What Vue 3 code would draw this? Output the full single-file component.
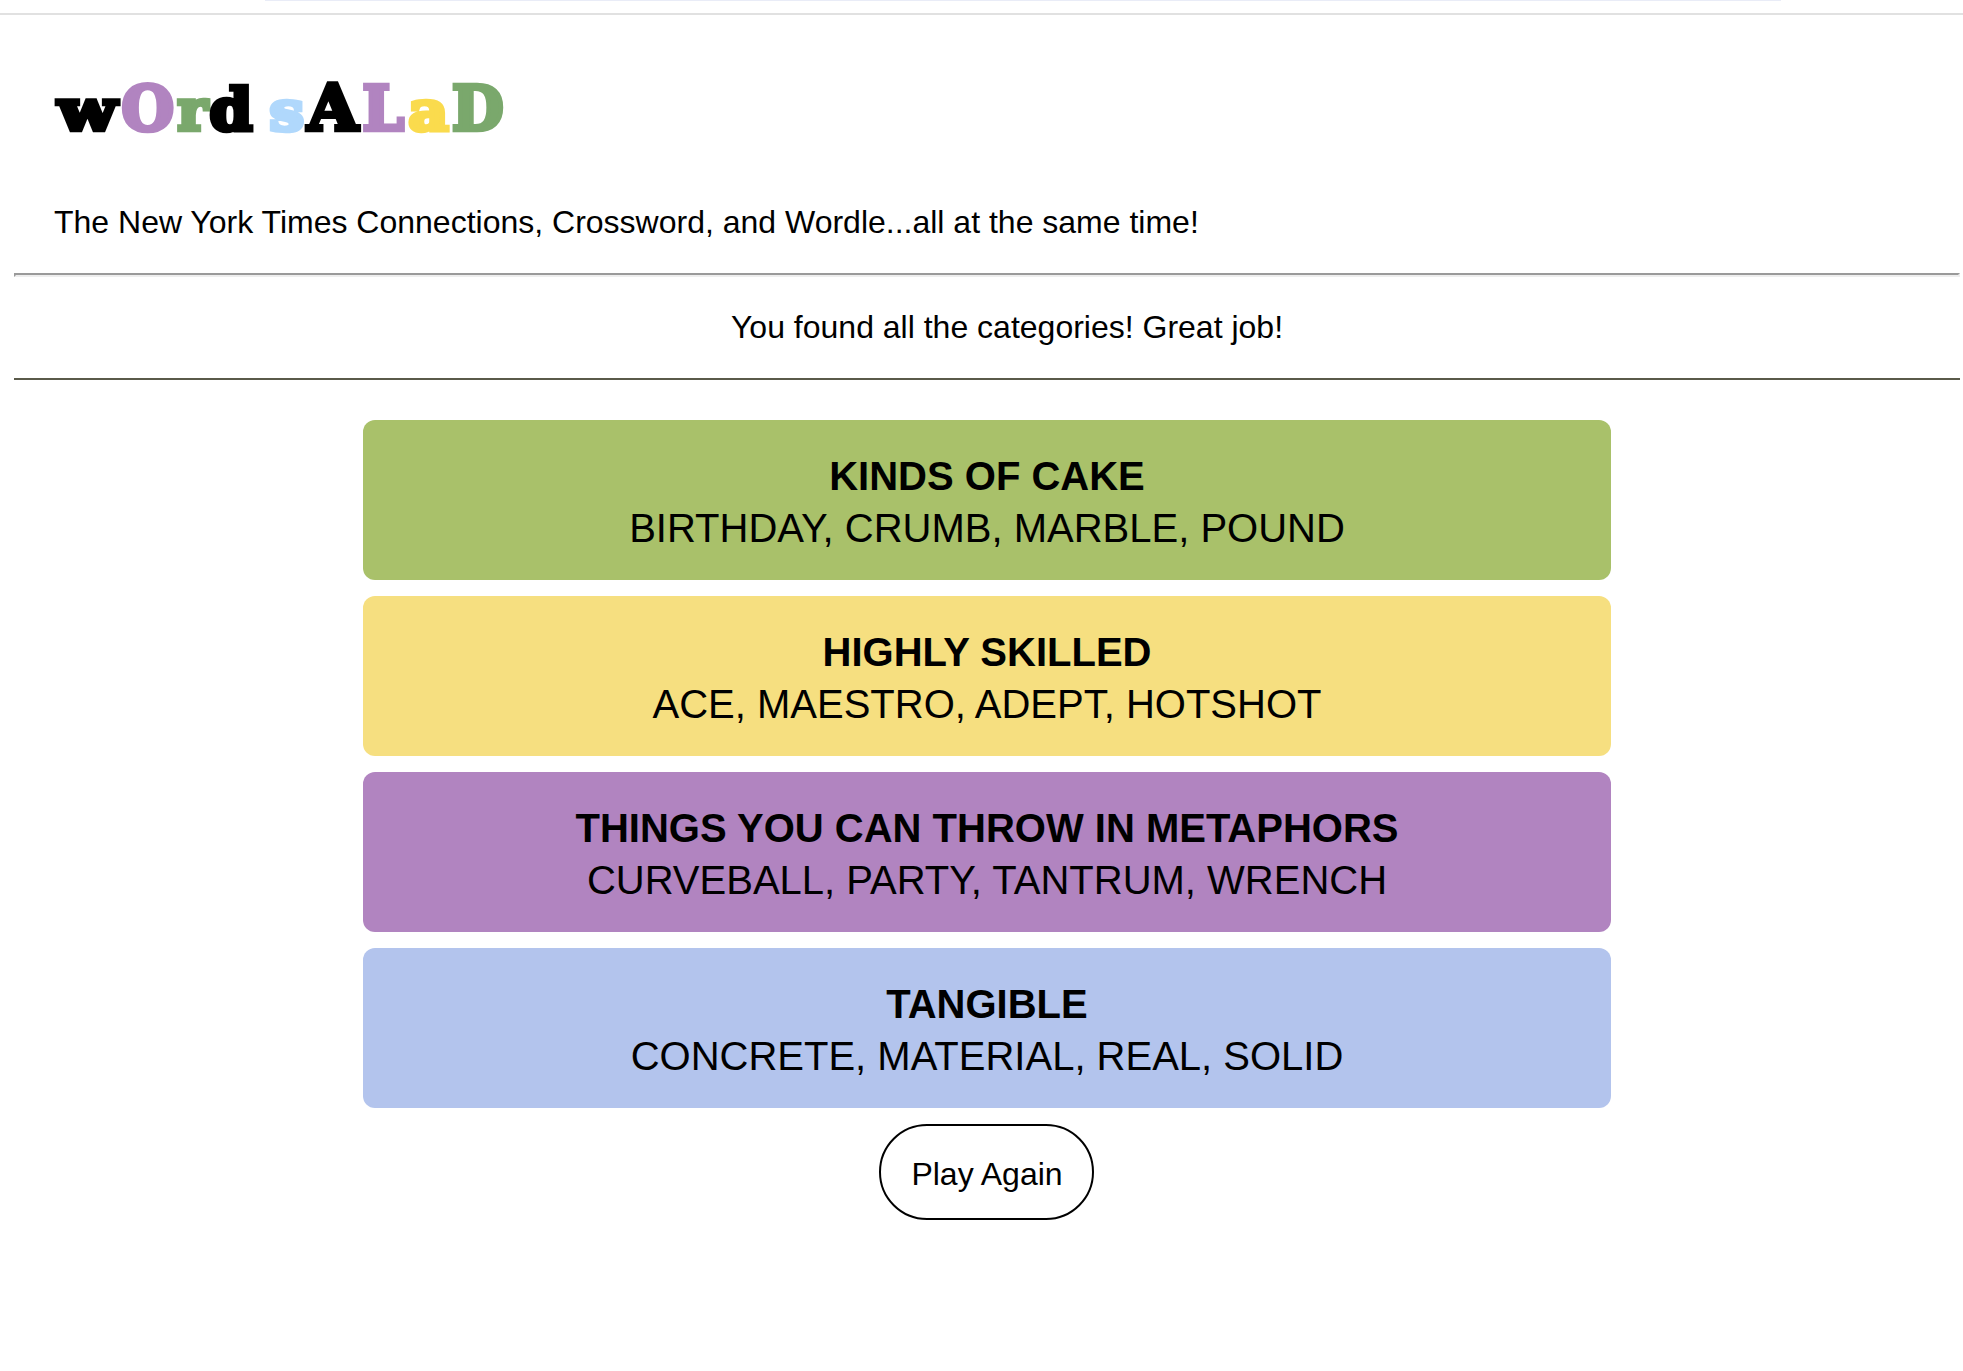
<script setup>
const letters = [
  { ch: 'w', x: 58, w: 58.5, size: 56, color: '#000000' },
  { ch: 'O', x: 121.5, w: 52.5, size: 62, color: '#b184c0' },
  { ch: 'r', x: 177.5, w: 30, size: 56, color: '#7aa86c' },
  { ch: 'd', x: 209.5, w: 43, size: 58.5, color: '#000000' },
  { ch: 's', x: 269.5, w: 34.5, size: 55, color: '#b0d8fc' },
  { ch: 'A', x: 307.5, w: 50.5, size: 63, color: '#000000' },
  { ch: 'L', x: 362.5, w: 41.5, size: 62, color: '#b184c0' },
  { ch: 'a', x: 408.5, w: 40, size: 55, color: '#fadb4d' },
  { ch: 'D', x: 452, w: 51.5, size: 62, color: '#7aa86c' },
]
const categories = [
  { name: 'KINDS OF CAKE', words: 'BIRTHDAY, CRUMB, MARBLE, POUND', tone: 'green' },
  { name: 'HIGHLY SKILLED', words: 'ACE, MAESTRO, ADEPT, HOTSHOT', tone: 'yellow' },
  { name: 'THINGS YOU CAN THROW IN METAPHORS', words: 'CURVEBALL, PARTY, TANTRUM, WRENCH', tone: 'purple' },
  { name: 'TANGIBLE', words: 'CONCRETE, MATERIAL, REAL, SOLID', tone: 'blue' },
]
</script>

<template>
  <div class="page">
    <div class="chrome"><div class="edge"></div></div>
    <main>
      <header>
        <svg class="logo" width="480" height="90" viewBox="40 60 480 90" role="img" aria-label="word salad">
          <text
            v-for="(l, i) in letters"
            :key="i"
            :x="l.x"
            y="129.5"
            :font-size="l.size"
            :textLength="l.w"
            lengthAdjust="spacingAndGlyphs"
            :fill="l.color"
            :stroke="l.color"
            stroke-width="4.6"
          >{{ l.ch }}</text>
        </svg>
        <p class="tagline">The New York Times Connections, Crossword, and Wordle...all at the same time!</p>
      </header>
      <hr class="rule" />
      <p class="message">You found all the categories! Great job!</p>
      <div class="divider"></div>
      <section class="cards">
        <div v-for="c in categories" :key="c.name" class="card" :class="c.tone">
          <strong>{{ c.name }}</strong>
          <span>{{ c.words }}</span>
        </div>
      </section>
      <button class="again">Play Again</button>
    </main>
  </div>
</template>

<style>
body { margin: 0; background: #fff; }
</style>

<style scoped>
.page {
  width: 1963px;
  height: 1371px;
  overflow: hidden;
  box-sizing: border-box;
  background: #fff;
  color: #000;
  font-family: "Liberation Sans", Arial, sans-serif;
  font-size: 32px;
}
.chrome { height: 13px; border-bottom: 2px solid #e1e1e1; }
.edge { height: 1px; margin: 0 182px 0 265px; background: #e9ecf7; }
main {
  width: 1946px;
  margin-left: 14px;
  display: flex;
  flex-direction: column;
}
header { height: 258px; padding: 45px 0 0 26px; box-sizing: border-box; }
.logo { display: block; font-family: "DejaVu Serif", serif; font-weight: 700; stroke-linejoin: miter; }
.tagline { margin: 54px 0 0 14px; line-height: 36px; white-space: nowrap; }
.rule {
  width: 100%;
  height: 4px;
  box-sizing: border-box;
  margin: 0;
  border: 2px solid;
  border-color: #9a9a9a #eeeeee #eeeeee #9a9a9a;
}
.message { margin: 0; padding: 32px 0 33px 40px; line-height: 36px; text-align: center; }
.divider { height: 2px; background: #5a5a4a; }
.cards { display: flex; flex-direction: column; align-items: center; gap: 16px; padding-top: 40px; }
.card {
  width: 1248px;
  height: 160px;
  box-sizing: border-box;
  padding-top: 30px;
  border-radius: 12px;
  text-align: center;
  font-size: 40px;
  line-height: 52px;
  display: flex;
  flex-direction: column;
}
.green { background: #a9c16a; }
.yellow { background: #f6df80; }
.purple { background: #b184c0; }
.blue { background: #b3c4ed; }
.again {
  align-self: center;
  width: 215px;
  height: 96px;
  margin: 16px 1px 0 0;
  padding: 4px 0 0 1px;
  border: 2px solid #000;
  border-radius: 48px;
  background: #fff;
  color: #000;
  font: inherit;
}
</style>
